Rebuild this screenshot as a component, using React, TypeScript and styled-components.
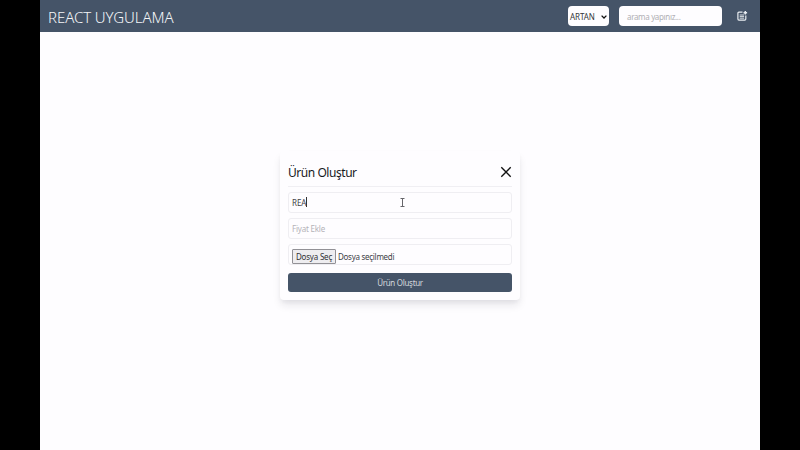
import React from "react";
import styled, { createGlobalStyle } from "styled-components";

const GlobalStyle = createGlobalStyle`
  *, *::before, *::after { box-sizing: border-box; }
  body {
    margin: 0;
    background: #000;
    overflow: hidden;
    font-family: "Noto Sans", "Open Sans", sans-serif;
  }
`;

const Screen = styled.div`
  width: 720px;
  height: 450px;
  margin: 0 auto;
  display: flex;
  flex-direction: column;
  background: #fefdff;
`;

const Navbar = styled.header`
  height: 32px;
  flex: none;
  display: flex;
  align-items: center;
  padding: 0 12px 0 8px;
  background: #455468;
  color: #f4f6f8;
`;

const Brand = styled.div`
  flex: 1;
  font-size: 15px;
  font-weight: 350;
  line-height: 20px;
  letter-spacing: -0.08px;
  padding-top: 1px;
`;

const SortSelect = styled.div`
  width: 41px;
  height: 20px;
  display: flex;
  align-items: center;
  justify-content: space-between;
  padding: 1px 2px 0 2px;
  border-radius: 4px;
  background: #fefdff;
  color: #34363a;
  font-size: 8px;
  letter-spacing: -0.1px;
`;

const SearchBox = styled.div`
  width: 103px;
  height: 20px;
  margin: 0 14px 0 10px;
  display: flex;
  align-items: center;
  padding: 1px 8px 0;
  border-radius: 4px;
  background: #fefdff;
  color: #b0afb4;
  font-size: 8px;
  letter-spacing: -0.34px;
`;

const AddButton = styled.div`
  width: 12px;
  height: 12px;
  display: flex;
  color: #e9edf1;
`;

const Stage = styled.main`
  flex: 1;
  display: flex;
  justify-content: center;
  align-items: flex-start;
  padding-top: 119px;
`;

const Modal = styled.section`
  width: 240px;
  height: 149px;
  padding: 8px;
  border-radius: 4px;
  background: #fefdff;
  box-shadow: 0 6px 8px -1px rgba(30, 30, 50, 0.1), 0 3px 4px -1px rgba(30, 30, 50, 0.05);
`;

const ModalHeader = styled.div`
  height: 28px;
  display: flex;
  justify-content: space-between;
  align-items: center;
  padding-bottom: 1px;
  border-bottom: 1px solid #f0eff3;
  color: #17191d;
`;

const ModalTitle = styled.h2`
  margin: 0;
  padding-top: 1px;
  font-size: 12px;
  font-weight: 430;
  line-height: 16px;
  letter-spacing: -0.45px;
`;

const Field = styled.div<{ $muted?: boolean; $top?: boolean }>`
  height: 20.5px;
  margin-top: ${(p) => (p.$top ? "5px" : "5.5px")};
  display: flex;
  align-items: center;
  padding: 0 3px;
  border: 1px solid #efeef2;
  border-radius: 3px;
  font-size: 8px;
  letter-spacing: ${(p) => (p.$muted ? "-0.2px" : "-0.28px")};
  color: ${(p) => (p.$muted ? "#b4b3b8" : "#404247")};
`;

const TextValue = styled.span`
  flex: none;
  letter-spacing: -0.05px;
`;

const Caret = styled.span`
  width: 1px;
  height: 10px;
  background: #333;
`;

const Pointer = styled.svg`
  margin-left: 93px;
`;

const FileButton = styled.span`
  width: 44px;
  height: 15px;
  margin: 4px 2px 0 0;
  flex: none;
  display: flex;
  justify-content: center;
  border: 1px solid #929196;
  border-radius: 1px;
  background: #eeedf0;
  color: #303236;
  line-height: 14px;
  letter-spacing: -0.2px;
`;

const FileName = styled.span`
  margin-top: 4px;
`;

const SubmitButton = styled.div`
  height: 19.5px;
  margin-top: 8px;
  display: flex;
  align-items: center;
  justify-content: center;
  border-radius: 3px;
  background: #455468;
  color: #d2d7dd;
  font-size: 8px;
  letter-spacing: -0.3px;
`;

export default function App() {
  return (
    <>
      <GlobalStyle />
      <Screen>
        <Navbar>
          <Brand>REACT UYGULAMA</Brand>
          <SortSelect>
            ARTAN
            <svg width="6" height="4" viewBox="0 0 6 4" fill="none">
              <path d="M.6.6 3 3 5.4.6" stroke="#111" strokeWidth="1.3" />
            </svg>
          </SortSelect>
          <SearchBox>arama yapınız...</SearchBox>
          <AddButton>
            <svg width="12" height="12" viewBox="0 0 12 12" fill="none" stroke="currentColor">
              <path d="M6.5 2.2H2.9a1 1 0 0 0-1 1v5.9a1 1 0 0 0 1 1h5.9a1 1 0 0 0 1-1V5.6" strokeWidth="1.2" />
              <path d="M3.7 5h4.4M3.7 6.6h4.4M3.7 8.2h4.4" strokeWidth=".9" />
              <path d="M9.3.9v3.6M7.5 2.7h3.6" strokeWidth="1.5" />
            </svg>
          </AddButton>
        </Navbar>
        <Stage>
          <Modal>
            <ModalHeader>
              <ModalTitle>Ürün Oluştur</ModalTitle>
              <svg width="12" height="12" viewBox="0 0 12 12" fill="none">
                <path d="m1.3 1.3 9.4 9.4M10.7 1.3l-9.4 9.4" stroke="#111" strokeWidth="1.35" />
              </svg>
            </ModalHeader>
            <Field $top>
              <TextValue>REA</TextValue>
              <Caret />
              <Pointer width="5" height="9" viewBox="0 0 5 9" fill="none">
                <path d="M.5.5h4M.5 8.5h4M2.5.5v8" stroke="#66666a" />
              </Pointer>
            </Field>
            <Field $muted>Fiyat Ekle</Field>
            <Field>
              <FileButton>Dosya Seç</FileButton>
              <FileName>Dosya seçilmedi</FileName>
            </Field>
            <SubmitButton>Ürün Oluştur</SubmitButton>
          </Modal>
        </Stage>
      </Screen>
    </>
  );
}
